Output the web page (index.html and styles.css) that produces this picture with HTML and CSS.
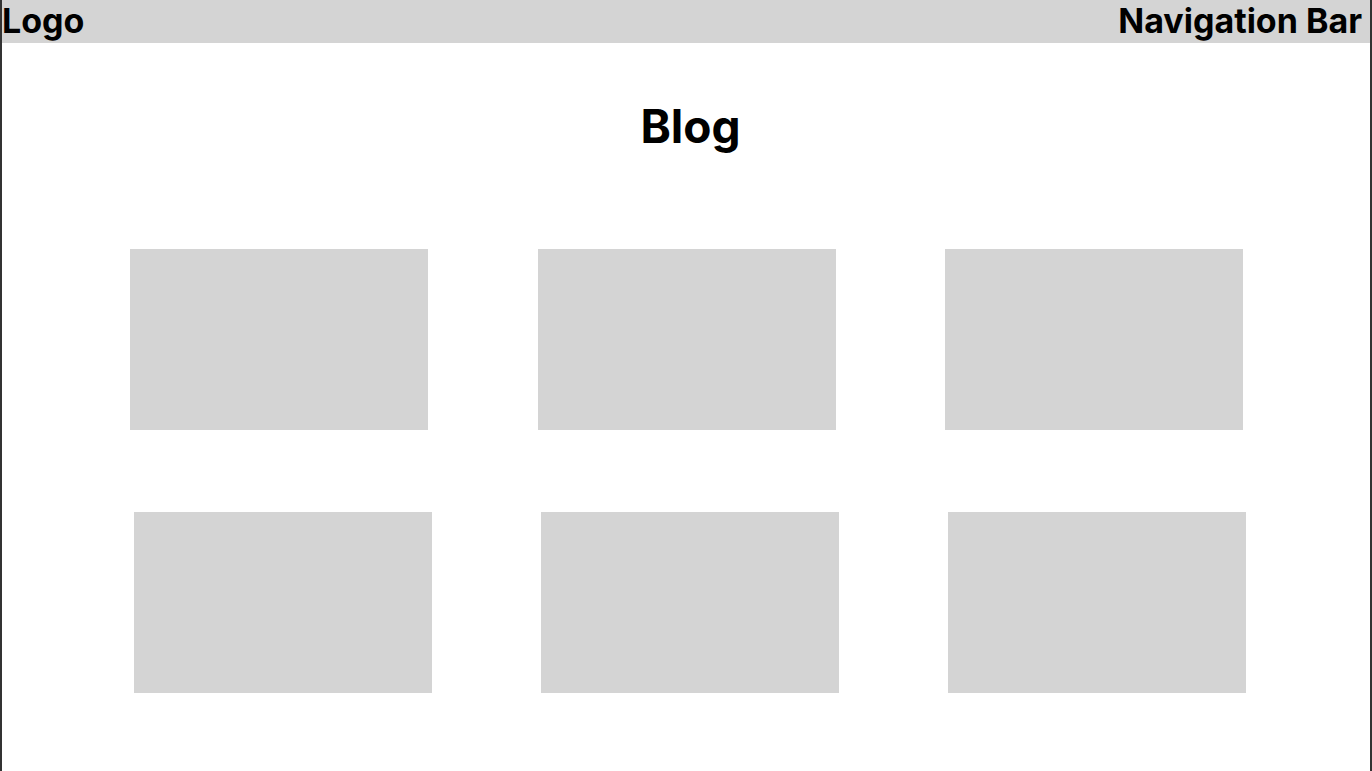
FILE: index.html
```html
<!DOCTYPE html>
<html>
  <head>
    <meta charset="utf-8">
    <title>Blog</title>
    <link rel="stylesheet" href="styles.css">
  </head>
  <body>
    <div class="page">
      <div class="header">
        <div class="logo">Logo</div>
        <div class="nav">Navigation Bar</div>
      </div>

      <h1 class="title">Blog</h1>

      <div class="row row1">
        <div class="post"></div>
        <div class="post"></div>
        <div class="post"></div>
      </div>
      <div class="row row2">
        <div class="post"></div>
        <div class="post"></div>
        <div class="post"></div>
      </div>
    </div>
  </body>
</html>
```

FILE: styles.css
```css
body {
    margin: 0;
    font-family: Inter, "Liberation Sans", sans-serif;
    background-color: white;
}
.page {
    border-left: 2px solid #333;
    border-right: 2px solid #333;
    height: 771px;
    box-sizing: border-box;
}
.header {
    display: flex;
    justify-content: space-between;
    background-color: #d4d4d4;
    height: 43px;
    font-size: 34px;
    font-weight: 700;
    line-height: 41px;
    padding-right: 8px;
}
.title {
    margin: 55px 0 0 0;
    padding-left: 9px;
    text-align: center;
    font-size: 46px;
    font-weight: 700;
}
.row {
    display: flex;
    justify-content: space-between;
}
.row1 {
    margin-top: 95px;
    padding: 0 127px 0 128px;
}
.row2 {
    margin-top: 82px;
    padding: 0 124px 0 132px;
}
.post {
    width: 298px;
    height: 181px;
    background-color: #d4d4d4;
}
```
